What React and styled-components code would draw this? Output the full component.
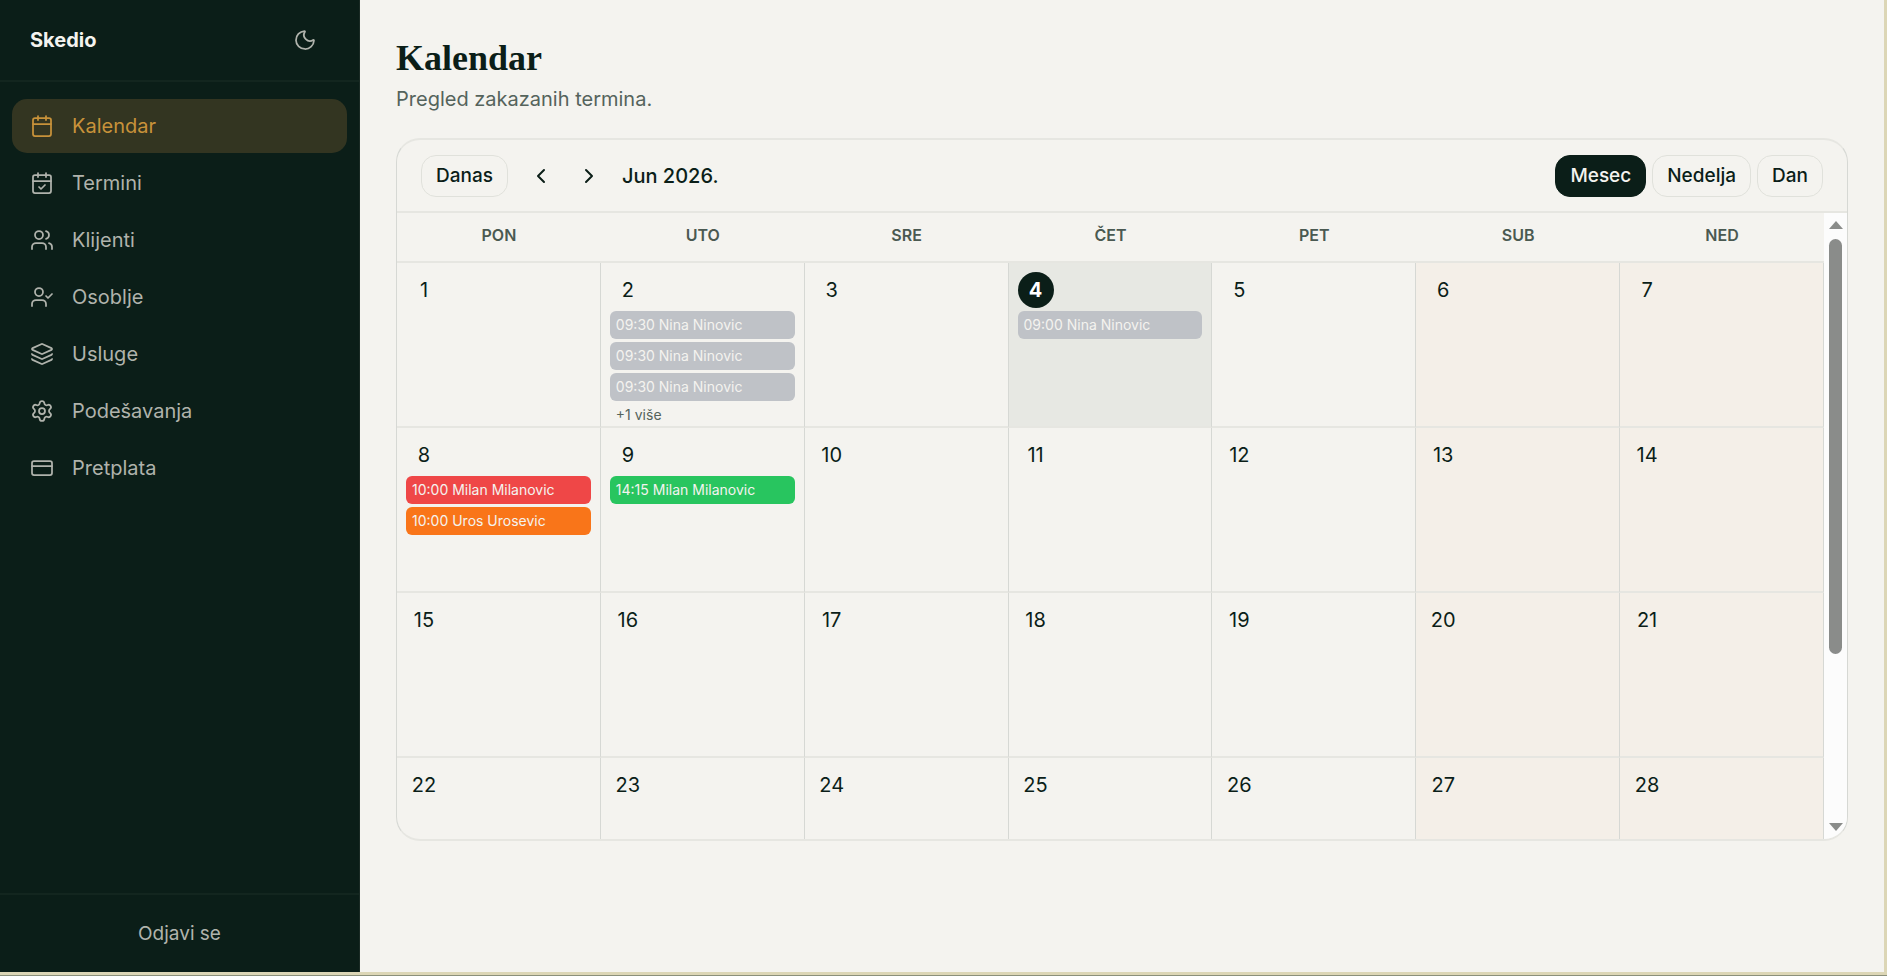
import styled, { createGlobalStyle } from "styled-components";
import {
  Calendar,
  CalendarCheck,
  ChevronLeft,
  ChevronRight,
  CreditCard,
  Layers,
  Moon,
  Settings,
  UserCheck,
  Users,
} from "lucide-react";

const navItems = [
  { label: "Kalendar", icon: Calendar, active: true },
  { label: "Termini", icon: CalendarCheck },
  { label: "Klijenti", icon: Users },
  { label: "Osoblje", icon: UserCheck },
  { label: "Usluge", icon: Layers },
  { label: "Podešavanja", icon: Settings },
  { label: "Pretplata", icon: CreditCard },
];

const weekdays = ["PON", "UTO", "SRE", "ČET", "PET", "SUB", "NED"];

const weeks = [
  [1, 2, 3, 4, 5, 6, 7],
  [8, 9, 10, 11, 12, 13, 14],
  [15, 16, 17, 18, 19, 20, 21],
  [22, 23, 24, 25, 26, 27, 28],
];

const today = 4;

const colors = {
  past: "#bfc2c7",
  red: "#ef4747",
  orange: "#f97519",
  green: "#28c55f",
};

const events = {
  2: [
    { time: "09:30", client: "Nina Ninovic", color: "past" },
    { time: "09:30", client: "Nina Ninovic", color: "past" },
    { time: "09:30", client: "Nina Ninovic", color: "past" },
  ],
  4: [{ time: "09:00", client: "Nina Ninovic", color: "past" }],
  8: [
    { time: "10:00", client: "Milan Milanovic", color: "red" },
    { time: "10:00", client: "Uros Urosevic", color: "orange" },
  ],
  9: [{ time: "14:15", client: "Milan Milanovic", color: "green" }],
};

const more = { 2: 1 };

const App = () => {
  return (
    <Window>
      <GlobalStyle />
      <Shell>
        <Sidebar />
        <Main>
          <Title>Kalendar</Title>
          <Subtitle>Pregled zakazanih termina.</Subtitle>
          <Card>
            <Toolbar />
            <Body>
              <Month />
              <ScrollTrack>
                <Arrow viewBox="0 0 14 8">
                  <path d="M7 0 14 8H0z" />
                </Arrow>
                <Thumb />
                <Arrow viewBox="0 0 14 8">
                  <path d="M0 0h14L7 8z" />
                </Arrow>
              </ScrollTrack>
            </Body>
          </Card>
        </Main>
      </Shell>
    </Window>
  );
};

const Sidebar = () => {
  return (
    <Aside>
      <Brand>
        <Logo>Skedio</Logo>
        <IconButton aria-label="Tema" $muted>
          <Moon size={24} strokeWidth={1.75} />
        </IconButton>
      </Brand>
      <Nav>
        {navItems.map(({ label, icon: Icon, active }) => (
          <NavLink key={label} href="#" $active={active}>
            <Icon size={24} strokeWidth={1.75} />
            {label}
          </NavLink>
        ))}
      </Nav>
      <Logout>Odjavi se</Logout>
    </Aside>
  );
};

const Toolbar = () => {
  return (
    <Bar>
      <Button>Danas</Button>
      <Arrows>
        <IconButton aria-label="Prethodni">
          <ChevronLeft size={24} />
        </IconButton>
        <IconButton aria-label="Sledeći">
          <ChevronRight size={24} />
        </IconButton>
      </Arrows>
      <Period>Jun 2026.</Period>
      <Views>
        <Button $active>Mesec</Button>
        <Button>Nedelja</Button>
        <Button>Dan</Button>
      </Views>
    </Bar>
  );
};

const Month = () => {
  return (
    <Table>
      <thead>
        <tr>
          {weekdays.map((day) => (
            <Weekday key={day}>{day}</Weekday>
          ))}
        </tr>
      </thead>
      <tbody>
        {weeks.map((week) => (
          <tr key={week[0]}>
            {week.map((day, i) => (
              <Day key={day} $weekend={i > 4} $today={day === today}>
                <DayContent>
                  <DayNumber $today={day === today}>{day}</DayNumber>
                  {(events[day] || []).map((event, n) => (
                    <Event key={n} $color={colors[event.color]}>
                      {event.time} {event.client}
                    </Event>
                  ))}
                  {more[day] && <More>+{more[day]} više</More>}
                </DayContent>
              </Day>
            ))}
          </tr>
        ))}
      </tbody>
    </Table>
  );
};

const GlobalStyle = createGlobalStyle`
  * {
    box-sizing: border-box;
  }

  body {
    margin: 0;
    font-family: "Inter", "Liberation Sans", sans-serif;
    font-size: 20px;
    color: #0b1e18;
    background-color: #f4f3ef;
  }

  button {
    font-family: inherit;
    color: inherit;
    cursor: pointer;
  }
`;

const Window = styled.div`
  height: 100vh;
  border-bottom: 1px solid #8b907b;
`;

const Shell = styled.div`
  display: flex;
  height: 100%;
  border-right: 3px solid #dcd6b6;
  border-bottom: 3px solid #dcd6b6;
`;

const Aside = styled.aside`
  display: flex;
  flex-direction: column;
  flex: 0 0 360px;
  background-color: #0b1e18;
  border-right: 1px solid #1a2a24;
  color: #b0b3ac;
`;

const Brand = styled.div`
  display: flex;
  align-items: center;
  justify-content: space-between;
  height: 82px;
  padding: 0 30px;
  border-bottom: 2px solid #13261f;
`;

const Logo = styled.span`
  font-size: 20px;
  font-weight: 700;
  color: #f4f3ef;
`;

const IconButton = styled.button`
  display: flex;
  align-items: center;
  justify-content: center;
  width: 48px;
  height: 42px;
  padding: 0;
  border: 0;
  border-radius: 15px;
  background: none;
  color: ${(props) => (props.$muted ? "#b0b3ac" : "#0b1e18")};
`;

const Nav = styled.nav`
  display: flex;
  flex-direction: column;
  flex: 1;
  gap: 3px;
  padding: 17px 12px;
`;

const NavLink = styled.a`
  display: flex;
  align-items: center;
  gap: 18px;
  height: 54px;
  padding: 0 18px;
  border-radius: 15px;
  text-decoration: none;
  color: ${(props) => (props.$active ? "#c8923a" : "#b0b3ac")};
  background-color: ${(props) => (props.$active ? "#333521" : "transparent")};
`;

const Logout = styled.button`
  height: 79px;
  border: 0;
  border-top: 2px solid #13261f;
  background: none;
  font-size: 19px;
`;

const Main = styled.main`
  flex: 1;
  min-width: 0;
  padding: 36px;
`;

const Title = styled.h1`
  margin: 0;
  font-family: "Liberation Serif", serif;
  font-size: 36px;
  line-height: 45px;
  font-weight: 700;
`;

const Subtitle = styled.p`
  margin: 3px 0 24px;
  line-height: 30px;
  color: #55635c;
`;

const Card = styled.section`
  display: flex;
  flex-direction: column;
  height: calc(100vh - 273px);
  border: 1px solid #d6d8d4;
  border-width: 2px 1px;
  border-top-color: #e6e6e1;
  border-bottom-color: #e6e6e1;
  border-radius: 24px;
  overflow: hidden;
`;

const Bar = styled.div`
  display: flex;
  align-items: center;
  flex-shrink: 0;
  height: 73px;
  padding: 0 24px;
  border-bottom: 2px solid #e6e6e1;
`;

const Button = styled.button`
  height: 42px;
  padding: 0 14px;
  border: 1px solid ${(props) => (props.$active ? "#0b1e18" : "#e0e1db")};
  border-radius: 15px;
  font-size: 19px;
  font-weight: 500;
  color: ${(props) => (props.$active ? "#f4f3ef" : "#0b1e18")};
  background-color: ${(props) => (props.$active ? "#0b1e18" : "transparent")};
`;

const Arrows = styled.div`
  display: flex;
  margin: 0 9px;
`;

const Period = styled.span`
  font-weight: 500;
`;

const Views = styled.div`
  display: flex;
  gap: 6px;
  margin-left: auto;
`;

const Body = styled.div`
  display: flex;
  align-items: stretch;
  flex: 1;
  min-height: 0;
`;

const Table = styled.table`
  flex: 1;
  table-layout: fixed;
  width: 100%;
  border-spacing: 0;
`;

const Weekday = styled.th`
  height: 50px;
  padding: 12px 0 15px;
  border-bottom: 2px solid #e6e6e1;
  font-size: 16px;
  line-height: 21px;
  font-weight: 600;
  color: #4a5951;
`;

const Day = styled.td`
  height: 165px;
  padding: 0;
  vertical-align: top;
  border-right: 1px solid #d6d8d4;
  border-bottom: 2px solid #e6e6e1;
  background-color: ${(props) =>
    props.$today ? "#e7e8e3" : props.$weekend ? "#f4efe8" : "transparent"};
`;

const DayContent = styled.div`
  display: flex;
  flex-direction: column;
  gap: 3px;
  padding: 9px 9px 0;
`;

const DayNumber = styled.span`
  display: flex;
  align-items: center;
  justify-content: center;
  width: 36px;
  height: 36px;
  border-radius: 50%;
  font-weight: ${(props) => (props.$today ? 700 : 400)};
  color: ${(props) => (props.$today ? "#ffffff" : "#0b1e18")};
  background-color: ${(props) => (props.$today ? "#0b1e18" : "transparent")};
`;

const Event = styled.div`
  height: 28px;
  padding: 0 6px;
  border-radius: 6px;
  font-size: 14px;
  line-height: 28px;
  white-space: nowrap;
  overflow: hidden;
  text-overflow: ellipsis;
  color: #f4f3ef;
  background-color: ${(props) => props.$color};
`;

const More = styled.span`
  padding: 0 6px;
  font-size: 14px;
  line-height: 22px;
  color: #55635c;
`;

const ScrollTrack = styled.div`
  display: flex;
  flex-direction: column;
  align-items: center;
  flex: 0 0 23px;
  padding: 8px 0;
  background-color: #fcfcfc;
`;

const Arrow = styled.svg`
  flex-shrink: 0;
  width: 14px;
  height: 8px;
  fill: #8a8c8a;
`;

const Thumb = styled.div`
  width: 13px;
  height: 68%;
  margin: 10px 0 auto;
  border-radius: 7px;
  background-color: #8a8c8a;
`;

export default App;
